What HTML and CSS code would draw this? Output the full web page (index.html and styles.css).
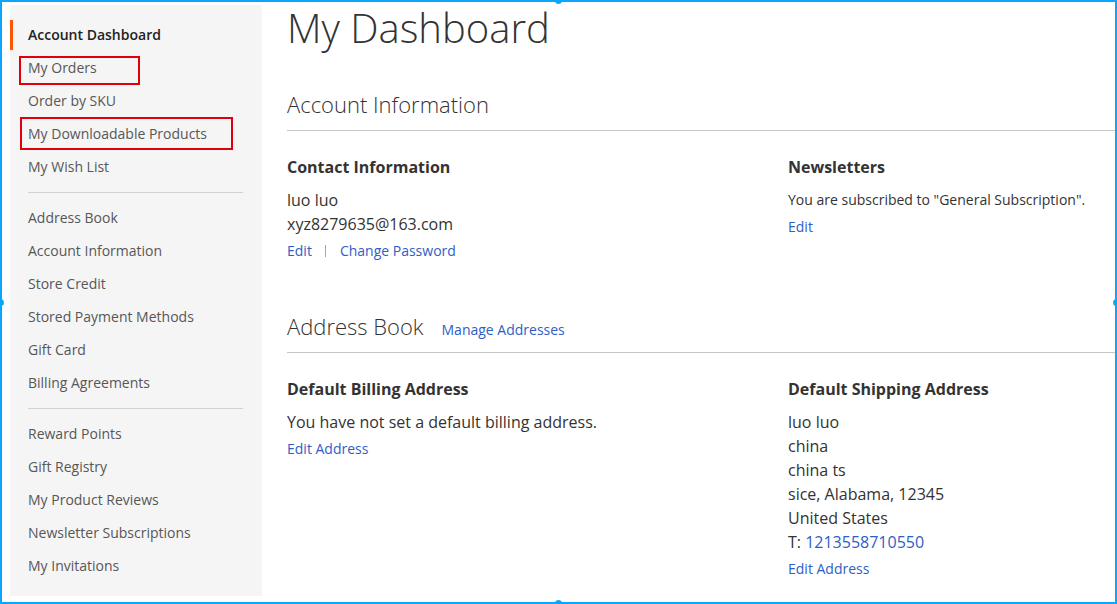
FILE: index.html
```html
<!DOCTYPE html>
<html lang="en">
<head>
<meta charset="utf-8">
<title>My Dashboard</title>
<link rel="stylesheet" href="styles.css">
</head>
<body>
<div class="frame">
  <span class="handle h-top"></span>
  <span class="handle h-bottom"></span>
  <span class="handle h-left"></span>
  <span class="handle h-right"></span>

  <aside class="sidebar">
    <ul class="nav">
      <li class="nav-item current"><strong>Account Dashboard</strong></li>
      <li class="nav-item marked marked-orders"><a href="#">My Orders</a></li>
      <li class="nav-item"><a href="#">Order by SKU</a></li>
      <li class="nav-item marked marked-downloads"><a href="#">My Downloadable Products</a></li>
      <li class="nav-item"><a href="#">My Wish List</a></li>
      <li class="nav-sep"></li>
      <li class="nav-item"><a href="#">Address Book</a></li>
      <li class="nav-item"><a href="#">Account Information</a></li>
      <li class="nav-item"><a href="#">Store Credit</a></li>
      <li class="nav-item"><a href="#">Stored Payment Methods</a></li>
      <li class="nav-item"><a href="#">Gift Card</a></li>
      <li class="nav-item"><a href="#">Billing Agreements</a></li>
      <li class="nav-sep"></li>
      <li class="nav-item"><a href="#">Reward Points</a></li>
      <li class="nav-item"><a href="#">Gift Registry</a></li>
      <li class="nav-item"><a href="#">My Product Reviews</a></li>
      <li class="nav-item"><a href="#">Newsletter Subscriptions</a></li>
      <li class="nav-item"><a href="#">My Invitations</a></li>
    </ul>
  </aside>

  <main class="main">
    <h1 class="page-title">My Dashboard</h1>

    <section class="block">
      <div class="block-title"><h2>Account Information</h2></div>
      <div class="block-content">
        <div class="box">
          <h3 class="box-title">Contact Information</h3>
          <p class="box-text">luo luo<br>xyz8279635@163.com</p>
          <div class="box-actions">
            <a href="#">Edit</a><span class="action-sep"></span><a href="#">Change Password</a>
          </div>
        </div>
        <div class="box">
          <h3 class="box-title">Newsletters</h3>
          <p class="box-text small">You are subscribed to "General Subscription".</p>
          <div class="box-actions"><a href="#">Edit</a></div>
        </div>
      </div>
    </section>

    <section class="block block-address">
      <div class="block-title"><h2>Address Book</h2><a class="title-link" href="#">Manage Addresses</a></div>
      <div class="block-content">
        <div class="box">
          <h3 class="box-title">Default Billing Address</h3>
          <p class="box-text">You have not set a default billing address.</p>
          <div class="box-actions"><a href="#">Edit Address</a></div>
        </div>
        <div class="box">
          <h3 class="box-title">Default Shipping Address</h3>
          <p class="box-text">luo luo<br>china<br>china ts<br>sice, Alabama, 12345<br>United States<br>T: <a href="#">1213558710550</a></p>
          <div class="box-actions"><a href="#">Edit Address</a></div>
        </div>
      </div>
    </section>
  </main>
</div>
</body>
</html>
```

FILE: styles.css
```css
*, *::before, *::after { box-sizing: border-box; }

html, body {
  margin: 0;
  padding: 0;
  background: #fff;
}

body {
  font-family: "Open Sans", "Noto Sans", sans-serif;
  color: #333;
  width: 1117px;
  height: 604px;
  overflow: hidden;
}

a { color: #2f5ec6; text-decoration: none; }

.frame {
  position: relative;
  width: 1117px;
  height: 604px;
  border: 2px solid #0aa6fb;
  padding: 3px 0 0 8px;
  display: flex;
  align-items: flex-start;
  gap: 25px;
  overflow: hidden;
}

.handle {
  position: absolute;
  width: 7px;
  height: 7px;
  border-radius: 50%;
  background: #0aa6fb;
  z-index: 5;
}
.h-top { top: -5px; left: 553px; }
.h-bottom { bottom: -5px; left: 553px; }
.h-left { left: -5px; top: 297px; }
.h-right { right: -5px; top: 297px; }

/* Sidebar */
.sidebar {
  flex: 0 0 252px;
  width: 252px;
  height: 591px;
  background: #f5f5f5;
  padding: 13px 0 0 0;
}

.nav {
  list-style: none;
  margin: 0;
  padding: 0;
}

.nav-item {
  position: relative;
  height: 33px;
  line-height: 33px;
  padding-left: 18px;
  font-size: 14px;
}

.nav-item a { color: #575757; }

.nav-item.current {
  border-left: 3px solid #ff5501;
  padding-left: 15px;
  height: 30px;
  line-height: 30px;
  margin: 2px 0 1px;
}
.nav-item.current strong { color: #222; font-weight: 600; }

.nav-sep {
  height: 1px;
  background: #d1d1d1;
  margin: 9px 19px 8px 18px;
}

.marked::after {
  content: "";
  position: absolute;
  border: 2px solid #e0000b;
  pointer-events: none;
}
.marked-orders::after { left: 9px; top: 5px; width: 121px; height: 29px; }
.marked-downloads::after { left: 10px; top: 0; width: 213px; height: 33px; }

/* Main */
.main {
  flex: 0 0 1000px;
  width: 1000px;
}

.page-title {
  margin: 0;
  font-size: 40px;
  font-weight: 300;
  line-height: 46px;
  color: #333;
  padding-top: 0;
}

.block { margin-top: 39px; }
.block-address { margin-top: 51px; }

.block-title {
  display: flex;
  align-items: baseline;
  gap: 18px;
  border-bottom: 1px solid #c6c6c6;
  padding-bottom: 12px;
}
.block-title h2 {
  margin: 0;
  font-size: 22px;
  font-weight: 300;
  line-height: 28px;
  color: #333;
}
.title-link { font-size: 14px; }

.block-content {
  display: grid;
  grid-template-columns: 501px 1fr;
  padding-top: 24px;
}

.box-title {
  margin: 0;
  font-size: 16px;
  font-weight: 700;
  line-height: 24px;
  color: #333;
}

.box-text {
  margin: 9px 0 0;
  font-size: 16px;
  line-height: 24px;
  color: #333;
}
.box-text.small { font-size: 14px; }

.box-actions {
  margin-top: 5px;
  font-size: 14px;
  line-height: 20px;
  display: flex;
  align-items: center;
}

.action-sep {
  display: inline-block;
  width: 1px;
  height: 12px;
  background: #a6a6a6;
  margin: 0 14px 0 13px;
}
```
